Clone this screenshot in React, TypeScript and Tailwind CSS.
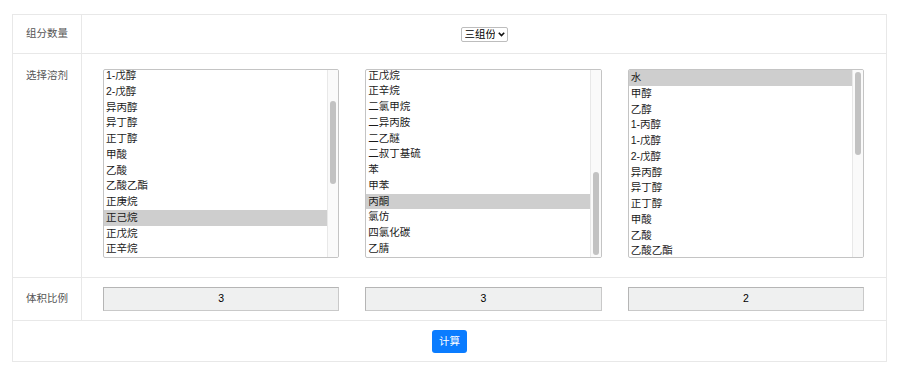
import { useEffect, useRef, useState } from 'react';

const SOLVENTS = [
  '水', '甲醇', '乙醇', '1-丙醇', '1-戊醇', '2-戊醇', '异丙醇', '异丁醇', '正丁醇',
  '甲酸', '乙酸', '乙酸乙酯', '正庚烷', '正己烷', '正戊烷', '正辛烷', '二氯甲烷',
  '二异丙胺', '二乙醚', '二叔丁基硫', '苯', '甲苯', '丙酮', '氯仿', '四氯化碳', '乙腈',
];

interface SolventListProps {
  selected: string;
  scroll: number | 'end';
}

// Headless browser hides native scrollbars, so the bar is drawn by hand
function SolventList({ selected, scroll }: SolventListProps) {
  const ref = useRef<HTMLDivElement>(null);
  const [thumb, setThumb] = useState({ top: 0, height: 0 });

  useEffect(() => {
    const el = ref.current;
    if (!el) return;
    el.scrollTop = scroll === 'end' ? el.scrollHeight : scroll;
    const track = el.clientHeight - 4;
    const h = (el.clientHeight / el.scrollHeight) * track;
    const t = (el.scrollTop / el.scrollHeight) * track + 2;
    setThumb({ top: t, height: h });
  }, [scroll]);

  return (
    <div className="h-[189px] flex border border-[#c4c4c4] rounded-[2px] bg-white overflow-hidden">
      <div ref={ref} className="flex-1 overflow-hidden text-[10.5px] text-[#1a1a1a]">
        {SOLVENTS.map((s) => (
          <div
            key={s}
            className={`h-[15.75px] leading-[15.75px] px-[2px] whitespace-nowrap ${
              s === selected ? 'bg-[#cecece]' : ''
            }`}
          >
            {s}
          </div>
        ))}
      </div>
      <div className="relative w-[11px] shrink-0 bg-[#fafafa] border-l border-[#e8e8e8]">
        <div
          className="absolute left-[2px] w-[6px] rounded-full bg-[#c2c2c2]"
          style={{ top: thumb.top, height: thumb.height }}
        />
      </div>
    </div>
  );
}

function RatioBox({ value }: { value: string }) {
  return (
    <div className="h-[24px] flex items-center justify-center bg-[#eff0f0] border border-[#c9c9c9] border-t-[#b5b5b5] border-l-[#b5b5b5] text-[10.5px] text-black">
      {value}
    </div>
  );
}

export default function App() {
  return (
    <div className="w-[900px] h-[372px] bg-white pl-[12px] pt-[14px] font-['Helvetica','Liberation_Sans','Noto_Sans_CJK_SC',sans-serif]">
      <div className="w-[875px] border border-[#e8e8e8]">
        {/* 组分数量 */}
        <div className="flex h-[39px] border-b border-[#e8e8e8]">
          <div className="w-[69px] border-r border-[#e8e8e8] pl-[13px] flex items-center text-[10.5px] text-[#555]">
            组分数量
          </div>
          <div className="flex-1 flex items-center justify-center">
            <div className="relative flex">
              <select
                defaultValue="3"
                className="appearance-none h-[15px] w-[47px] border border-[#bdbdbd] rounded-[2px] bg-white pl-[3px] pr-[12px] text-[10.5px] leading-[13px] text-black"
              >
                <option value="2">二组份</option>
                <option value="3">三组份</option>
              </select>
              <svg
                className="absolute right-[3px] top-[5px] w-[7px] h-[5px] pointer-events-none"
                viewBox="0 0 7 5"
                fill="none"
                stroke="#111"
                strokeWidth="1.6"
              >
                <path d="M0.8 0.8 L3.5 3.6 L6.2 0.8" />
              </svg>
            </div>
          </div>
        </div>

        {/* 选择溶剂 */}
        <div className="flex border-b border-[#e8e8e8]">
          <div className="w-[69px] border-r border-[#e8e8e8] pl-[13px] pt-[13px] text-[10.5px] leading-[16px] text-[#555]">
            选择溶剂
          </div>
          <div className="flex-1 grid grid-cols-3 gap-[26px] pl-[21px] pr-[22px] pt-[15px] pb-[19px]">
            <SolventList selected="正己烷" scroll={65} />
            <SolventList selected="丙酮" scroll="end" />
            <SolventList selected="水" scroll={0} />
          </div>
        </div>

        {/* 体积比例 */}
        <div className="flex h-[43px] border-b border-[#e8e8e8]">
          <div className="w-[69px] border-r border-[#e8e8e8] pl-[13px] flex items-center text-[10.5px] text-[#555]">
            体积比例
          </div>
          <div className="flex-1 grid grid-cols-3 gap-[26px] pl-[21px] pr-[22px] items-center">
            <RatioBox value="3" />
            <RatioBox value="3" />
            <RatioBox value="2" />
          </div>
        </div>

        {/* 计算 */}
        <div className="flex h-[40px] items-center justify-center">
          <button className="h-[23px] px-[7px] rounded-[3px] bg-[#0a7cff] text-white text-[10.5px] leading-none">
            计算
          </button>
        </div>
      </div>
    </div>
  );
}
